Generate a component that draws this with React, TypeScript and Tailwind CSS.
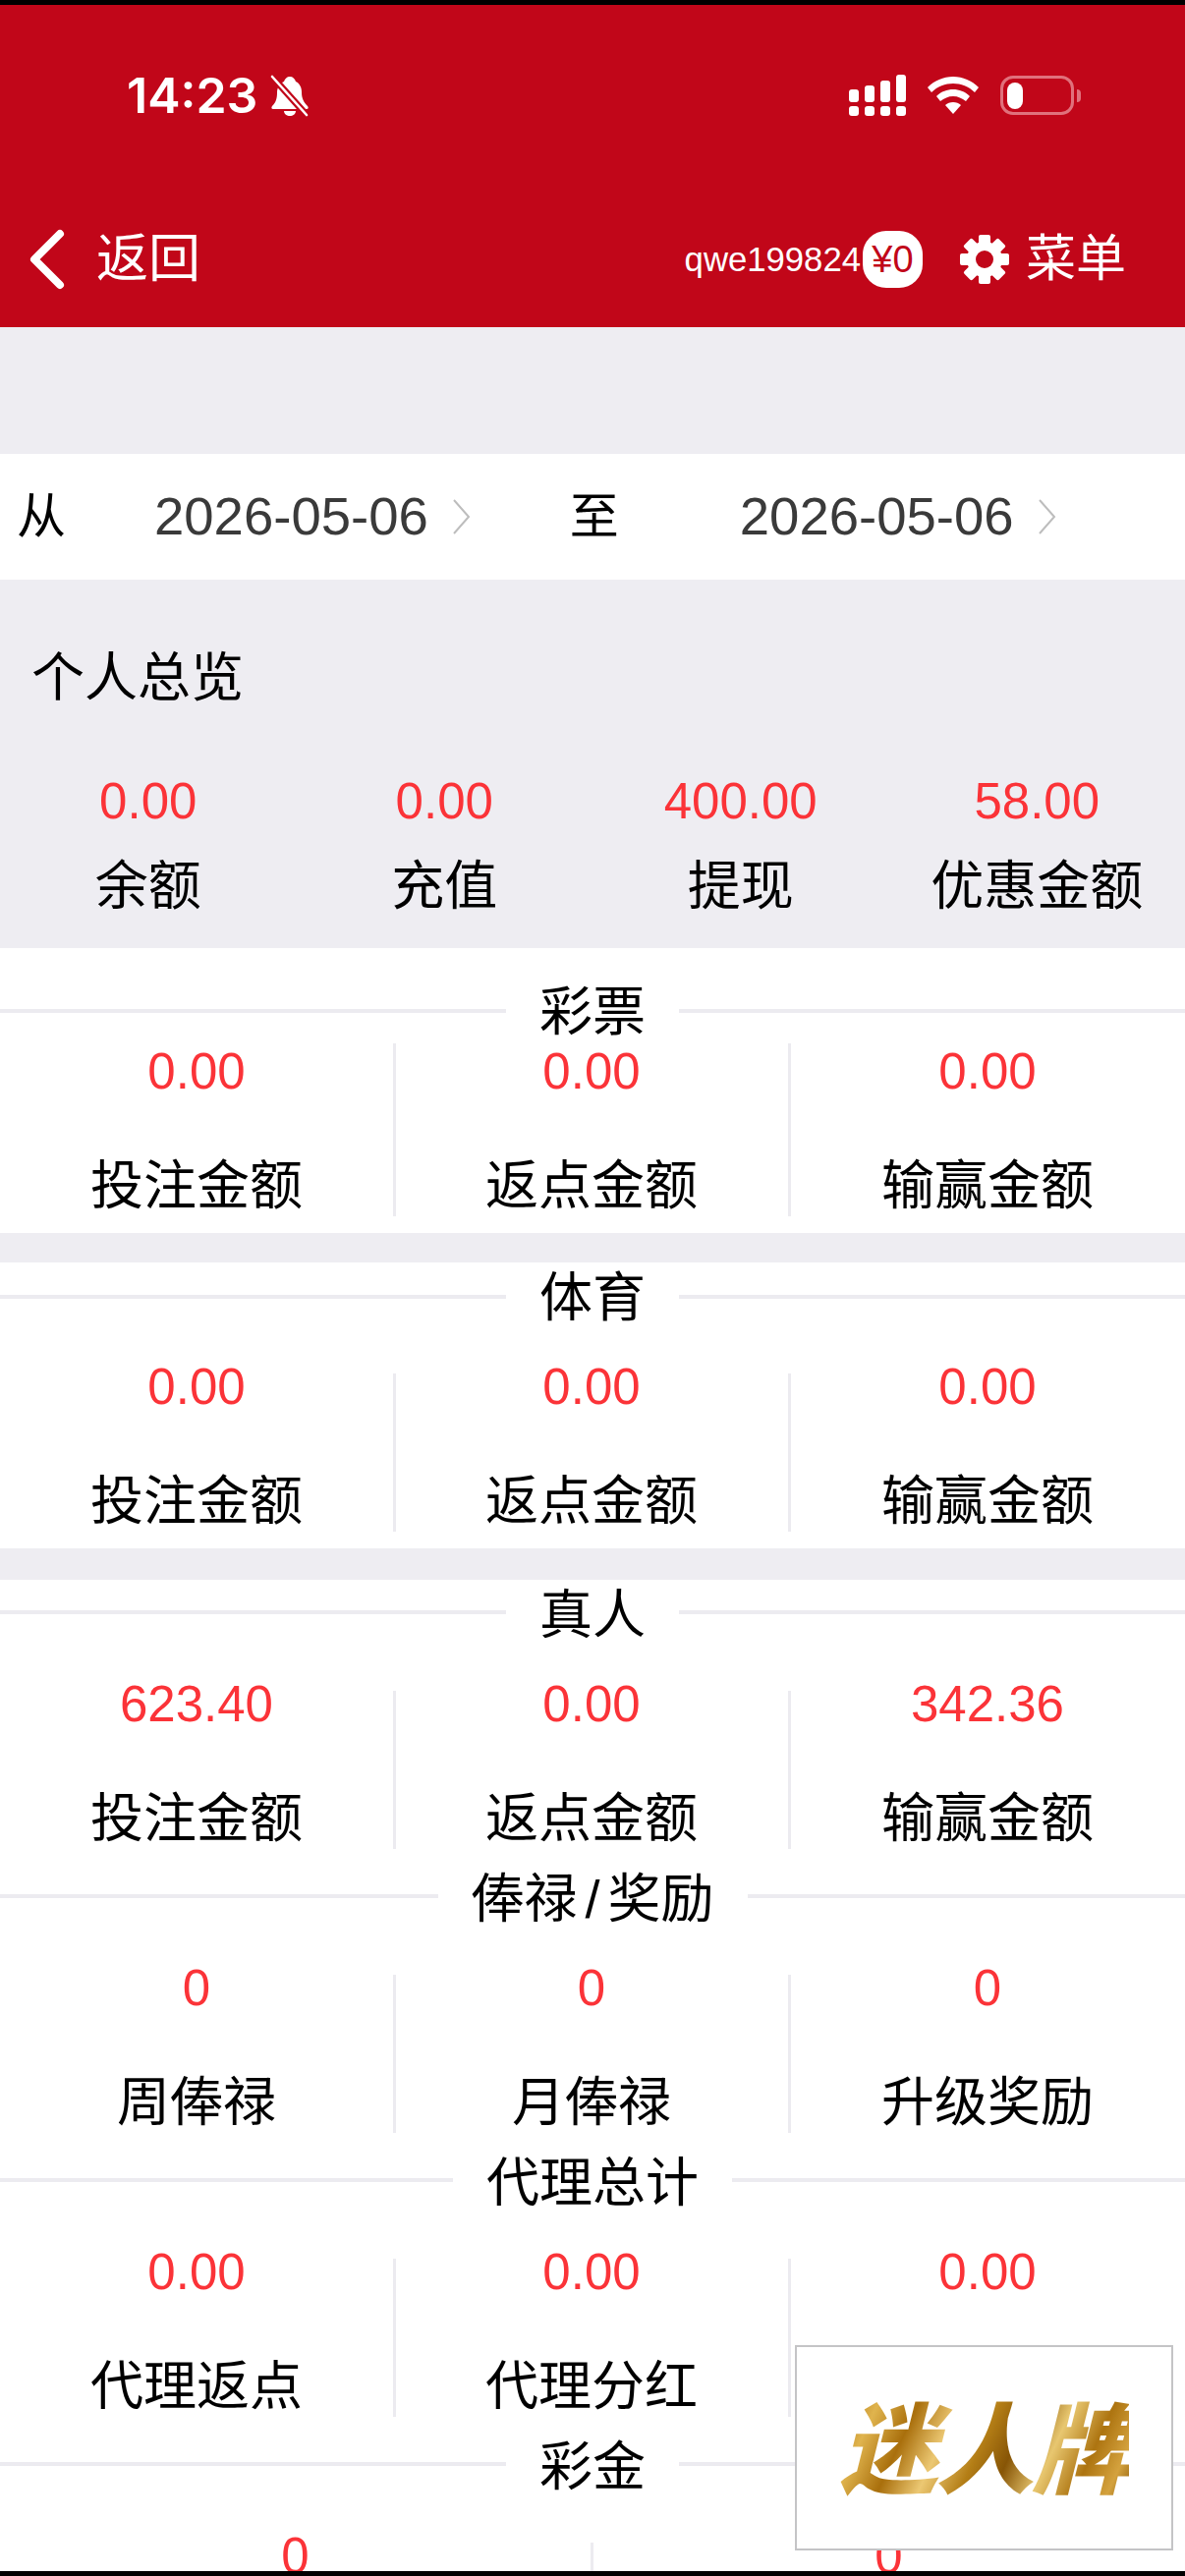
import React from 'react';

interface Stat {
  value: string;
  label: string;
}

interface SectionProps {
  title: string;
  stats: Stat[];
  first?: boolean;
  tight?: boolean;
}

const r = (value: string, label: string): Stat => ({ value, label });

const BellOff = () => (
  <svg width="40" height="43" viewBox="0 0 40 43" fill="none">
    <path
      d="M20 2c3 0 5 2 6 5 4 2 6 6 6 11 0 6 2 10 6 14 1 1 1 3-1 3H3c-2 0-2-2-1-3 4-4 5-8 5-14 0-5 3-9 7-11 1-3 3-5 6-5z"
      fill="#fff"
    />
    <path d="M14 37h12c0 3-3 5-6 5s-6-2-6-5z" fill="#fff" />
    <path d="M3 3l33 37" stroke="#c10619" strokeWidth="7" />
    <path d="M2 2l35 39" stroke="#fff" strokeWidth="2.6" strokeLinecap="round" />
  </svg>
);

const SignalIcon = () => (
  <svg width="58" height="42" viewBox="0 0 58 42" fill="#fff">
    <rect x="0" y="15" width="10" height="13" rx="3" />
    <rect x="16" y="11" width="10" height="17" rx="3" />
    <rect x="32" y="6" width="10" height="22" rx="3" />
    <rect x="48" y="0" width="10" height="28" rx="3" />
    <rect x="0" y="32" width="10" height="10" rx="3" />
    <rect x="16" y="32" width="10" height="10" rx="3" />
    <rect x="32" y="32" width="10" height="10" rx="3" />
    <rect x="48" y="32" width="10" height="10" rx="3" />
  </svg>
);

const WifiIcon = () => (
  <svg width="52" height="38" viewBox="0 0 52 38" fill="#fff">
    <path d="M26 0c10 0 19 4 26 11l-4 5C42 10 34 7 26 7S10 10 4 16l-4-5C7 4 16 0 26 0z" />
    <path d="M26 13c6 0 12 2 17 7l-4 5c-4-3-8-5-13-5s-9 2-13 5l-4-5c5-5 11-7 17-7z" />
    <path d="M26 26c3 0 6 1 8 3l-8 9-8-9c2-2 5-3 8-3z" />
  </svg>
);

const BatteryIcon = () => (
  <div className="flex items-center gap-[3px]">
    <div className="flex h-[40px] w-[75px] items-center rounded-[13px] border-[3px] border-[#e0717c] pl-[4px]">
      <div className="h-[27px] w-[16px] rounded-[8px] bg-white" />
    </div>
    <div className="h-[13px] w-[4px] rounded-r-[4px] bg-[#e0717c]" />
  </div>
);

const Chevron = () => (
  <svg width="20" height="38" viewBox="0 0 20 38" fill="none">
    <path d="M2 2l15 17L2 36" stroke="#bdbdbd" strokeWidth="2" />
  </svg>
);

// menu gear, 8 chunky teeth and a small hole
const Gear = () => (
  <svg width="52" height="52" viewBox="0 0 52 52" fill="#fff" className="ml-[37px]">
    {[0, 45, 90, 135, 180, 225, 270, 315].map((deg) => (
      <rect key={deg} x="20" y="1" width="12" height="14" rx="2" transform={`rotate(${deg} 26 26)`} />
    ))}
    <circle cx="26" cy="26" r="18" />
    <circle cx="26" cy="26" r="9" fill="#c10619" />
  </svg>
);

const Section: React.FC<SectionProps> = ({ title, stats, first, tight }) => (
  <section className={first ? 'pt-[29px] pb-[17px]' : tight ? 'pb-[15px]' : 'pb-[17px]'}>
    <div className="flex h-[70px] items-center">
      <div className={`h-[4px] flex-1 bg-[#ecebf0] ${tight ? '-translate-y-[2px]' : ''}`} />
      <div className="h-[70px] px-[34px] text-[54px] leading-[73px] text-black [word-spacing:-7px]">{title}</div>
      <div className={`h-[4px] flex-1 bg-[#ecebf0] ${tight ? '-translate-y-[2px]' : ''}`} />
    </div>
    <div className={`grid ${stats.length === 2 ? 'grid-cols-2' : 'grid-cols-3'} ${first ? '-mt-[2px]' : 'mt-[43px]'}`}>
      {stats.map((s, i) => (
        <div
          key={i}
          className={`${first ? 'h-[176px]' : 'h-[161px]'} text-center ${
            i < stats.length - 1 ? '-mr-[1px] border-r-[3px] border-[#ecebf0]' : ''
          }`}
        >
          <div className={`${first ? '-mt-[1px]' : '-mt-[16px]'} h-[60px] text-[51px] leading-[60px] text-[#fb3338]`}>
            {s.value}
          </div>
          <div className="mt-[50px] h-[70px] text-[54px] leading-[73px] text-black">{s.label}</div>
        </div>
      ))}
    </div>
  </section>
);

const OverviewStat: React.FC<Stat> = ({ value, label }) => (
  <div className="text-center">
    <div className="h-[60px] text-[51px] leading-[60px] text-[#fb3338]">{value}</div>
    <div className="mt-[20px] h-[70px] text-[54px] leading-[73px] text-black">{label}</div>
  </div>
);

const App = () => {
  return (
    <div className="relative h-[2622px] w-[1206px] overflow-hidden bg-white font-['Liberation_Sans','Noto_Sans_CJK_SC',sans-serif]">
      {/* Header */}
      <header className="h-[333px] border-t-[5px] border-black bg-[#c10619] text-white">
        <div className="flex h-[122px] items-end justify-between pl-[129px] pr-[106px]">
          <div className="flex h-[60px] items-center gap-[13px]">
            <span className="font-['Inter',sans-serif] text-[50px] font-semibold leading-[60px]">14:23</span>
            <BellOff />
          </div>
          <div className="flex h-[60px] items-center gap-[22px]">
            <SignalIcon />
            <WifiIcon />
            <BatteryIcon />
          </div>
        </div>
        <div className="mt-[102px] flex h-[70px] items-center justify-between pl-[30px] pr-[60px]">
          <div className="flex items-center gap-[32px]">
            <svg width="36" height="62" viewBox="0 0 36 62" fill="none">
              <path d="M31 5L5 31l26 26" stroke="#fff" strokeWidth="8" strokeLinecap="round" strokeLinejoin="round" />
            </svg>
            <span className="text-[53px] leading-[70px]">返回</span>
          </div>
          <div className="flex items-center">
            <span className="text-[34.7px] leading-[70px]">qwe199824</span>
            <span className="ml-[2px] flex h-[58px] w-[61px] items-center justify-center rounded-[24px] bg-white text-[38px] text-[#c10619]">
              ¥0
            </span>
            <Gear />
            <span className="ml-[16px] text-[51px] leading-[70px]">菜单</span>
          </div>
        </div>
      </header>

      <div className="h-[129px] bg-[#eeedf2]" />

      {/* Date range */}
      <div className="flex h-[128px] items-center bg-white">
        <span className="w-[157px] pl-[17px] text-[50px] text-black">从</span>
        <span className="text-[54.5px] text-[#3a3a3a]">2026-05-06</span>
        <span className="ml-[24px]">
          <Chevron />
        </span>
        <span className="ml-[100px] w-[173px] text-[50px] text-black">至</span>
        <span className="text-[54.5px] text-[#3a3a3a]">2026-05-06</span>
        <span className="ml-[24px]">
          <Chevron />
        </span>
      </div>

      {/* Personal overview */}
      <div className="h-[375px] bg-[#eeedf2] pt-[62px]">
        <div className="h-[70px] pl-[32px] text-[54px] leading-[76px] text-black">个人总览</div>
        <div className="mt-[64px] grid grid-cols-4">
          <OverviewStat value="0.00" label="余额" />
          <OverviewStat value="0.00" label="充值" />
          <OverviewStat value="400.00" label="提现" />
          <OverviewStat value="58.00" label="优惠金额" />
        </div>
      </div>

      <Section first title="彩票" stats={[r('0.00', '投注金额'), r('0.00', '返点金额'), r('0.00', '输赢金额')]} />
      <div className="h-[30px] bg-[#eeedf2]" />
      <Section title="体育" stats={[r('0.00', '投注金额'), r('0.00', '返点金额'), r('0.00', '输赢金额')]} />
      <div className="h-[32px] bg-[#eeedf2]" />
      <Section tight title="真人" stats={[r('623.40', '投注金额'), r('0.00', '返点金额'), r('342.36', '输赢金额')]} />
      <Section tight title="俸禄 / 奖励" stats={[r('0', '周俸禄'), r('0', '月俸禄'), r('0', '升级奖励')]} />
      <Section tight title="代理总计" stats={[r('0.00', '代理返点'), r('0.00', '代理分红'), r('0.00', '')]} />
      <Section tight title="彩金" stats={[r('0', ''), r('0', '')]} />

      {/* Floating logo */}
      <div className="absolute bottom-[26px] right-[12px] flex h-[209px] w-[385px] items-center justify-center border-[2px] border-[#c4c4c6] bg-white pt-[6px]">
        <span className="bg-[linear-gradient(115deg,#a86c08_0%,#e0b44e_12%,#a96f0c_24%,#ecc873_36%,#b47e16_48%,#875506_58%,#e8c770_70%,#ad7410_82%,#d4a23e_92%,#855304_100%)] bg-clip-text text-[100px] font-black italic leading-[110px] tracking-[-2px] text-transparent">
          迷人牌
        </span>
      </div>

      {/* Home indicator strip */}
      <div className="absolute inset-x-0 bottom-0 h-[5px] bg-black" />
    </div>
  );
};

export default App;
